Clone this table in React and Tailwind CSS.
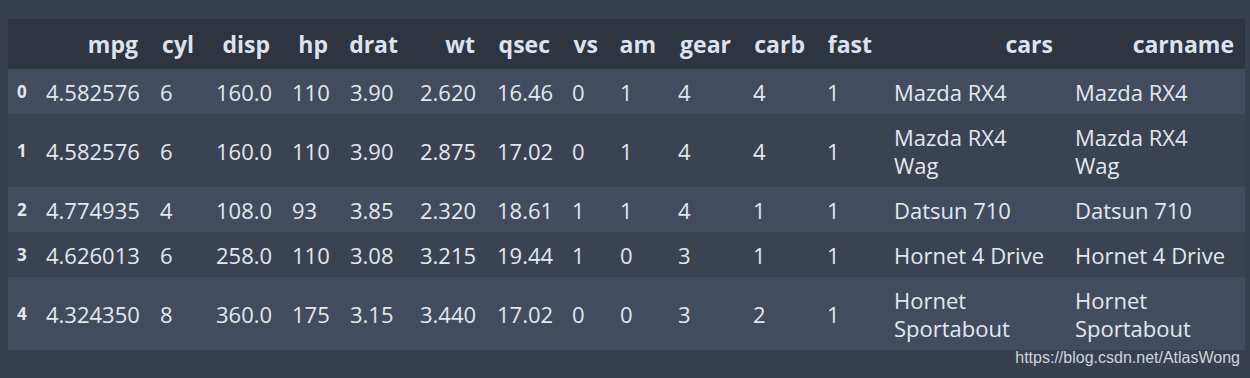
import React from 'react';

const columns = [
    { key: 'mpg', w: 'w-[114px]' },
    { key: 'cyl', w: 'w-[56px]' },
    { key: 'disp', w: 'w-[76px]' },
    { key: 'hp', w: 'w-[58px]' },
    { key: 'drat', w: 'w-[70px]' },
    { key: 'wt', w: 'w-[77px]' },
    { key: 'qsec', w: 'w-[75px]' },
    { key: 'vs', w: 'w-[48px]' },
    { key: 'am', w: 'w-[58px]' },
    { key: 'gear', w: 'w-[75px]' },
    { key: 'carb', w: 'w-[74px]' },
    { key: 'fast', w: 'w-[67px]' },
    { key: 'cars', w: 'w-[181px]' },
    { key: 'carname', w: 'w-[181px]' },
];

const rows = [
    ['4.582576', '6', '160.0', '110', '3.90', '2.620', '16.46', '0', '1', '4', '4', '1', 'Mazda RX4', 'Mazda RX4'],
    ['4.582576', '6', '160.0', '110', '3.90', '2.875', '17.02', '0', '1', '4', '4', '1', 'Mazda RX4 Wag', 'Mazda RX4 Wag'],
    ['4.774935', '4', '108.0', '93', '3.85', '2.320', '18.61', '1', '1', '4', '1', '1', 'Datsun 710', 'Datsun 710'],
    ['4.626013', '6', '258.0', '110', '3.08', '3.215', '19.44', '1', '0', '3', '1', '1', 'Hornet 4 Drive', 'Hornet 4 Drive'],
    ['4.324350', '8', '360.0', '175', '3.15', '3.440', '17.02', '0', '0', '3', '2', '1', 'Hornet Sportabout', 'Hornet Sportabout'],
];

export default function App() {
    return (
        <div
            className="relative h-[378px] bg-[#383f4e] px-2 pt-[19px] text-[#e2e7f0]"
            style={{ fontFamily: '"Open Sans", "Noto Sans", sans-serif' }}
        >
            <table className="w-[1237px] table-fixed border-collapse text-[22px] leading-[28px]">
                <colgroup>
                    <col className="w-[27px]" />
                    {columns.map((c) => (
                        <col key={c.key} className={c.w} />
                    ))}
                </colgroup>
                <thead>
                    <tr className="bg-[#2e3440]">
                        <th className="py-[11px]"></th>
                        {columns.map((c) => (
                            <th key={c.key} className="py-[11px] pr-[11px] text-right text-[23px] font-bold text-[#dde3ee]">
                                {c.key}
                            </th>
                        ))}
                    </tr>
                </thead>
                <tbody>
                    {rows.map((r, i) => (
                        <tr key={i} className={i % 2 === 0 ? 'bg-[#434c5e]' : 'bg-[#3b4252]'}>
                            <th className="py-[8.5px] pl-[9px] text-left align-middle text-[17px] font-bold">{i}</th>
                            {r.map((v, j) => (
                                <td key={j} className="py-[8.5px] pl-[11px] pr-[11px] text-left align-middle">
                                    {v}
                                </td>
                            ))}
                        </tr>
                    ))}
                </tbody>
            </table>
            <div
                className="absolute right-[10px] top-[347px] text-[16px] leading-[22px] text-[#d0d4dc]"
                style={{ fontFamily: '"Liberation Sans", Arial, sans-serif' }}
            >
                https://blog.csdn.net/AtlasWong
            </div>
        </div>
    );
}
